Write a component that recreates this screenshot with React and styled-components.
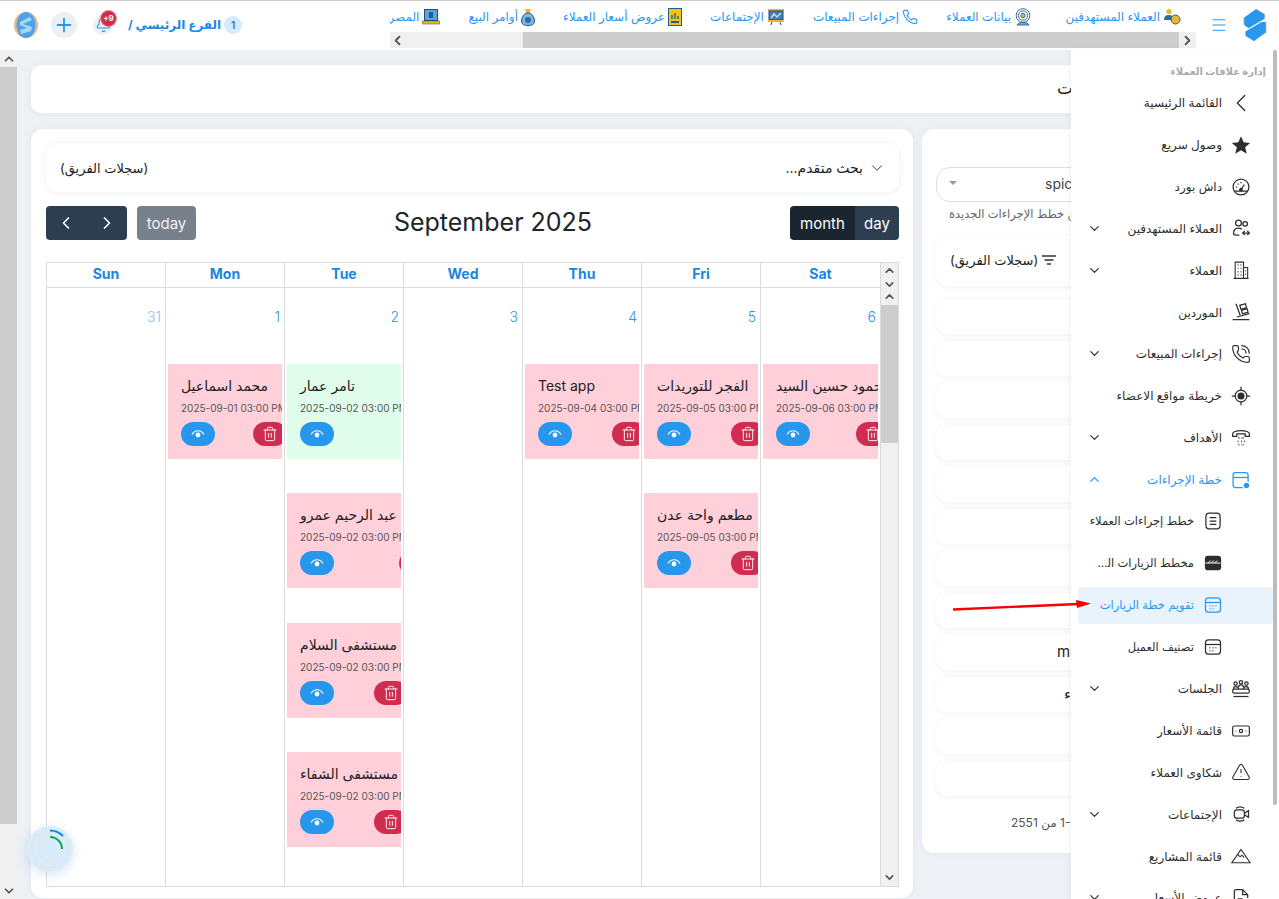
import React from 'react';
import styled, { createGlobalStyle } from 'styled-components';
import {
  Banknote,
  ChevronDown,
  ChevronLeft,
  ChevronRight,
  ChevronUp,
  Menu,
  PhoneCall,
  Plus,
  Bell,
  Trash2,
  TriangleAlert,
} from 'lucide-react';

const FONT = 'Inter, "Noto Sans", "DejaVu Sans", sans-serif';

const GlobalStyle = createGlobalStyle`
  html, body {
    margin: 0;
    height: 100%;
    overflow: hidden;
    background: #edf0f4;
    font-family: ${FONT};
  }
  * { box-sizing: border-box; }
`;

const LogoMark = ({ size = 28 }) => (
  <svg width={size} height={size * 1.15} viewBox="0 0 26 30">
    <path d="M2 8 2 14 6 16 6 7Z" fill="#f3c9a6" />
    <path d="M20 14 24 12 24 22 20 24Z" fill="#f3c9a6" />
    <path d="M14 0 22 5 22 9 7 18 3 15 3 8Z" fill="#2a97ee" />
    <path d="M23 12 23 22 12 30 4 25 4 21 19 12Z" fill="#2a97ee" />
  </svg>
);

const Avatar = () => (
  <svg width="24" height="26" viewBox="0 0 24 26">
    <ellipse cx="12" cy="13" rx="12" ry="13" fill="#e5b98a" />
    <ellipse cx="12" cy="13" rx="9.5" ry="13" fill="#4ea3e8" />
    <path d="M6 10 16 5 18 8 9 12 18 15 17 19 7 22 6 18 13 16 6 13Z" fill="#a8d8f8" />
  </svg>
);

const Spinner = () => (
  <svg width="46" height="46" viewBox="0 0 46 46">
    <circle cx="23" cy="23" r="23" fill="#d8ecfc" />
    <circle cx="23" cy="23" r="18.5" fill="none" stroke="#e4e6e6" strokeWidth="1.5" />
    <circle cx="23" cy="23" r="12" fill="none" stroke="#e4e6e6" strokeWidth="1.5" />
    <path d="M23 4.500A18.500 18.500 0 0 1 36 10" fill="none" stroke="#1a86e0" strokeWidth="2" />
    <path d="M23 11A12 12 0 0 1 35 23" fill="none" stroke="#14a44d" strokeWidth="2" />
  </svg>
);

const Arrow = () => (
  <svg width="140" height="12" viewBox="0 0 140 12">
    <path d="M1 9.500 126 4" stroke="#f40000" strokeWidth="2.400" fill="none" />
    <path d="M124 0 139 3.600 125 8Z" fill="#f40000" />
  </svg>
);

const EyeMark = () => (
  <svg width="14" height="12" viewBox="0 0 14 12" fill="none">
    <path d="M1 6.500C4 1.500 10 1.500 13 6.500" stroke="#fff" strokeWidth="1.200" />
    <circle cx="7" cy="7" r="2.400" fill="#fff" />
  </svg>
);

/* small coloured pictures of the top menu */
const TargetIcon = () => (
  <svg width="18" height="18" viewBox="0 0 18 18">
    <circle cx="6" cy="3.500" r="2.600" fill="#f0b429" />
    <path d="M1 12c0-4 2-5 5-5s4 1 4 3v2Z" fill="#2b6ea6" />
    <circle cx="12.500" cy="11.500" r="4.500" fill="#f0b429" stroke="#1f5f94" />
  </svg>
);
const DataIcon = () => (
  <svg width="18" height="18" viewBox="0 0 18 18" fill="none" stroke="#2b6ea6">
    <circle cx="9" cy="7.500" r="6.800" />
    <circle cx="9" cy="7.500" r="4.600" />
    <circle cx="9" cy="7.500" r="2.200" fill="#f0b429" />
    <path d="M3 17c1-2 3-2.500 6-2.500s5 .5 6 2.500Z" fill="#7fb3dc" />
  </svg>
);
const CallIcon = () => (
  <svg width="16" height="16" viewBox="0 0 24 24" fill="none" stroke="#2b96ee" strokeWidth="1.700">
    <path d="M22 17v3a2 2 0 0 1-2.200 2A19.800 19.800 0 0 1 2 4.200 2 2 0 0 1 4 2h3a2 2 0 0 1 2 1.700l.5 3a2 2 0 0 1-.6 1.800L7.600 9.800a16 16 0 0 0 6.600 6.600l1.300-1.300a2 2 0 0 1 1.800-.6l3 .5a2 2 0 0 1 1.700 2Z" />
  </svg>
);
const BoardIcon = () => (
  <svg width="18" height="18" viewBox="0 0 18 18">
    <rect x="1" y="1" width="16" height="2" fill="#f0b429" />
    <rect x="2" y="3" width="14" height="9" fill="#3d7fb8" stroke="#1f4f78" />
    <path d="M4 10 7 6 10 9 14 5" stroke="#bfe0f7" strokeWidth="1.500" fill="none" />
    <rect x="1" y="12" width="16" height="2" fill="#f0b429" />
    <path d="M5 14 4 17M13 14l1 3" stroke="#1f4f78" />
  </svg>
);
const OfferIcon = () => (
  <svg width="14" height="18" viewBox="0 0 14 18">
    <rect x=".5" y=".5" width="13" height="17" fill="#f0c419" stroke="#1f5f94" />
    <path d="M4 11V7M7 11V5M10 11V8" stroke="#1f5f94" strokeWidth="1.400" />
    <rect x="3" y="13" width="8" height="2" fill="#1f5f94" />
  </svg>
);
const BagIcon = () => (
  <svg width="14" height="18" viewBox="0 0 14 18">
    <path d="M4 1h6L8.500 5h-3Z" fill="#f0b429" />
    <path d="M5 5h4c3 2 4.500 5 4.500 8 0 3-2 4.500-6.500 4.500S.5 16 .5 13c0-3 1.500-6 4.500-8Z" fill="#7fb3dc" stroke="#1f5f94" />
    <circle cx="7" cy="12" r="3" fill="#2b6ea6" />
  </svg>
);
const LaptopIcon = () => (
  <svg width="18" height="16" viewBox="0 0 18 16">
    <rect x="2.500" y=".5" width="13" height="11" fill="#5aa4dc" stroke="#1f4f78" />
    <rect x="7" y="3" width="4" height="6" fill="#1f5f94" />
    <rect x="0" y="12" width="18" height="3" fill="#f0b429" stroke="#1f4f78" strokeWidth=".5" />
  </svg>
);

/* sidebar line icons */
const line = { width: 20, height: 20, viewBox: '0 0 24 24', fill: 'none', stroke: 'currentColor', strokeWidth: 1.5 };
const StarMark = () => (
  <svg width="20" height="20" viewBox="0 0 24 24" fill="currentColor">
    <path d="M12 1.500 15.200 8.800 23 9.500 17 14.700 18.900 22.500 12 18.300 5.100 22.500 7 14.700 1 9.500 8.800 8.800Z" />
  </svg>
);
const Dial = () => (
  <svg {...line}>
    <circle cx="12" cy="12" r="9.500" />
    <path d="M3.500 17h17M12 15l4-6M6 12h1.500M12 6v1.500M8 8l1 1" />
    <circle cx="12" cy="15" r="1.500" fill="currentColor" />
  </svg>
);
const PeopleSwap = () => (
  <svg {...line}>
    <circle cx="9" cy="6" r="3.500" />
    <circle cx="17" cy="7" r="2.800" />
    <path d="M3 19c0-5 2-7 6-7 1.500 0 3 .4 4 1.500M3 19c0 1 1 1.500 3 1.500h4M14 18h8M19.500 15.500 22 18l-2.500 2.500M16.500 20.500 14 18l2.500-2.500" />
  </svg>
);
const Tower = () => (
  <svg {...line} strokeWidth={1.3}>
    <path d="M5 22V2.500h10V22M15 9h5v13M3 22h18" />
    <path d="M8 6h1M11.500 6h1M8 10h1M11.500 10h1M8 14h1M11.500 14h1M8 18h1M11.500 18h1M17 13h1M17 17h1" strokeWidth="1.700" />
  </svg>
);
const Trolley = () => (
  <svg {...line}>
    <path d="M6 2 11 16M2 21h20M7 18l15-4" />
    <rect x="11" y="3" width="7" height="5" transform="rotate(-15 14 5)" />
    <rect x="13" y="9" width="7" height="4.500" transform="rotate(-15 16 11)" />
  </svg>
);
const Locate = () => (
  <svg {...line}>
    <circle cx="12" cy="12" r="7" />
    <circle cx="12" cy="12" r="3.500" fill="currentColor" />
    <path d="M12 1v4M12 19v4M1 12h4M19 12h4" />
  </svg>
);
const DeskPhone = () => (
  <svg {...line}>
    <path d="M2 10V7c0-2 4-4 10-4s10 2 10 4v3h-5V7H7v3Z" />
    <path d="M9 12h1M14 12h1M8 16h1M12 16h1M16 16h1M9 20h1M14 20h1M12 12h.5M12 20h.5" strokeWidth="2.200" />
  </svg>
);
const PlanIcon = () => (
  <svg {...line}>
    <rect x="2.500" y="3" width="18" height="18" rx="3" />
    <path d="M2.500 9h18" />
    <circle cx="18.500" cy="18.500" r="4" fill="currentColor" stroke="#fff" />
  </svg>
);
const ListBox = () => (
  <svg {...line}>
    <rect x="3.500" y="2.500" width="17" height="19" rx="4" />
    <path d="M8 8h8M8 12h8M8 16h8" />
  </svg>
);
const DarkChart = () => (
  <svg {...line}>
    <rect x="3" y="4" width="18" height="16" rx="3" fill="currentColor" />
    <path d="M6 12l3-3M10 12l3-3M14 12l3-3M3 12h18" stroke="#fff" strokeWidth="1.200" />
  </svg>
);
const CalendarBox = () => (
  <svg {...line}>
    <rect x="3" y="3.500" width="18" height="17" rx="3.500" />
    <path d="M3 9h18" />
    <path d="M8 13h1M11.500 13h1M15 13h1M8 16.500h1M11.500 16.500h1" strokeWidth="1.800" />
  </svg>
);
const Sessions = () => (
  <svg {...line}>
    <circle cx="5.500" cy="5.500" r="2" />
    <circle cx="12" cy="4" r="2" />
    <circle cx="18.500" cy="5.500" r="2" />
    <path d="M3 12c0-2 1-3 2.500-3S9 10 9 12M9 10c0-2 1-3 3-3s3 1 3 3M15 12c0-2 1-3 3-3s3 1 3 3" />
    <rect x="2" y="12" width="20" height="5" rx="2" />
    <path d="M3 21h18" />
  </svg>
);
const Meeting = () => (
  <svg {...line}>
    <path d="M6 5a9 9 0 0 1 10 0M6 19a9 9 0 0 0 10 0" />
    <rect x="4" y="7" width="12" height="10" rx="3" />
    <path d="m16 11 5-3v8l-5-3" />
  </svg>
);
const Peak = () => (
  <svg {...line} strokeWidth={1.3}>
    <path d="M1 20 12 4l11 16ZM8 10l3 3 2-2 3 3" />
  </svg>
);
const QuoteFile = () => (
  <svg {...line}>
    <path d="M14 2H6a2 2 0 0 0-2 2v16a2 2 0 0 0 2 2h7M14 2l6 6v4M14 2v6h6M8 13h6M8 17h4M16 20h6M19 17v6" />
  </svg>
);

const navItems = [
  { label: 'العملاء المستهدفين', Icon: TargetIcon, min: 100 },
  { label: 'بيانات العملاء', Icon: DataIcon },
  { label: 'إجراءات المبيعات', Icon: CallIcon },
  { label: 'الإجتماعات', Icon: BoardIcon },
  { label: 'عروض أسعار العملاء', Icon: OfferIcon },
  { label: 'أوامر البيع', Icon: BagIcon },
  { label: 'المصر', Icon: LaptopIcon },
];

const menuItems = [
  { label: 'القائمة الرئيسية', icon: <ChevronLeft size={30} strokeWidth={1} /> },
  { label: 'وصول سريع', icon: <StarMark /> },
  { label: 'داش بورد', icon: <Dial /> },
  { label: 'العملاء المستهدفين', icon: <PeopleSwap />, caret: 'down' },
  { label: 'العملاء', icon: <Tower />, caret: 'down' },
  { label: 'الموردين', icon: <Trolley /> },
  { label: 'إجراءات المبيعات', icon: <PhoneCall size={20} strokeWidth={1.4} />, caret: 'down' },
  { label: 'خريطة مواقع الاعضاء', icon: <Locate /> },
  { label: 'الأهداف', icon: <DeskPhone />, caret: 'down' },
  { label: 'خطة الإجراءات', icon: <PlanIcon />, caret: 'up', open: true },
  { label: 'خطط إجراءات العملاء', icon: <ListBox />, sub: true },
  { label: 'مخطط الزيارات الشهري', icon: <DarkChart />, sub: true, max: 102 },
  { label: 'تقويم خطة الزيارات', icon: <CalendarBox />, sub: true, active: true },
  { label: 'تصنيف العميل', icon: <CalendarBox />, sub: true },
  { label: 'الجلسات', icon: <Sessions />, caret: 'down' },
  { label: 'قائمة الأسعار', icon: <Banknote size={20} strokeWidth={1.4} /> },
  { label: 'شكاوى العملاء', icon: <TriangleAlert size={20} strokeWidth={1.3} /> },
  { label: 'الإجتماعات', icon: <Meeting />, caret: 'down' },
  { label: 'قائمة المشاريع', icon: <Peak /> },
  { label: 'عروض الأسعار', icon: <QuoteFile />, caret: 'down' },
];

const days = [
  { name: 'Sun', date: 31, muted: true, events: [] },
  { name: 'Mon', date: 1, events: [{ title: 'محمد اسماعيل', at: '2025-09-01 03:00 PM' }] },
  {
    name: 'Tue',
    date: 2,
    events: [
      { title: 'تامر عمار', at: '2025-09-02 03:00 PM', done: true },
      { title: 'محمد عبد الرحيم عمرو', at: '2025-09-02 03:00 PM' },
      { title: 'مستشفى السلام', at: '2025-09-02 03:00 PM' },
      { title: 'مستشفى الشفاء', at: '2025-09-02 03:00 PM' },
    ],
  },
  { name: 'Wed', date: 3, events: [] },
  { name: 'Thu', date: 4, events: [{ title: 'Test app', at: '2025-09-04 03:00 PM' }] },
  {
    name: 'Fri',
    date: 5,
    events: [
      { title: 'الفجر للتوريدات', at: '2025-09-05 03:00 PM' },
      { title: 'مطعم واحة عدن', at: '2025-09-05 03:00 PM' },
    ],
  },
  { name: 'Sat', date: 6, events: [{ title: 'محمود حسين السيد', at: '2025-09-06 03:00 PM' }] },
];

const customerRows = [
  {}, {}, {}, {}, {}, {}, {}, {},
  { text: 'mahmoud', inset: 121 },
  { text: 'شركة الضياء', inset: 128 },
  {}, {},
];

const Page = styled.div`
  position: relative;
  width: 100%;
  height: 100vh;
  display: flex;
  flex-direction: column;
  overflow: hidden;
`;

const Header = styled.header`
  flex: none;
  height: 50px;
  display: flex;
  align-items: flex-start;
  background: #fff;
  border-top: 1px solid #cfcfcf;
`;

const Tools = styled.div`
  display: flex;
  align-items: center;
  height: 47px;
  padding-left: 14px;
`;

const RoundTool = styled.div`
  position: relative;
  width: ${(p) => p.$size}px;
  height: ${(p) => p.$size}px;
  margin-left: ${(p) => p.$gap}px;
  display: flex;
  align-items: center;
  justify-content: center;
  border-radius: 50%;
  background: #ebf0f5;
  color: #2b96ee;
`;

const Badge = styled.span`
  position: absolute;
  top: -4px;
  right: -3px;
  width: 15px;
  height: 15px;
  border-radius: 50%;
  background: #d02c50;
  color: #fff;
  font-size: 8px;
  font-weight: 700;
  line-height: 15px;
  text-align: center;
  box-shadow: 0 0 0 1px #e88;
`;

const Branch = styled.div`
  display: flex;
  align-items: center;
  gap: 3px;
  margin-left: 15px;
  font-size: 12px;
  font-weight: 700;
  color: #1e88e5;
  white-space: nowrap;
`;

const BranchCount = styled.span`
  width: 18px;
  height: 18px;
  border-radius: 50%;
  background: #d6eaff;
  color: #1e78c5;
  font-size: 10px;
  font-weight: 600;
  line-height: 18px;
  text-align: center;
`;

const NavStrip = styled.div`
  width: 806px;
  margin-left: auto;
  display: flex;
  flex-direction: column;
`;

const NavRow = styled.nav`
  direction: rtl;
  height: 31px;
  display: flex;
  align-items: center;
  gap: 28px;
  padding: 0 15px 0 0;
  overflow: hidden;
`;

const NavLink = styled.a`
  display: flex;
  align-items: center;
  gap: 3px;
  color: #2b96ee;
  font-size: 12px;
  white-space: nowrap;
`;

const NavLabel = styled.span`
  min-width: ${(p) => p.$min || 0}px;
`;

const Hbar = styled.div`
  height: 16px;
  display: flex;
  background: #f0f0f0;
  color: #555;
`;

const HbarEnd = styled.span`
  flex: none;
  width: ${(p) => p.$width}px;
  display: flex;
  align-items: center;
  justify-content: ${(p) => p.$justify};
`;

const HbarThumb = styled.span`
  flex: 1;
  background: #cdcdcd;
`;

const MenuButton = styled.button`
  flex: none;
  width: 45px;
  height: 47px;
  padding: 0;
  border: 0;
  background: none;
  color: #2b96ee;
  display: flex;
  align-items: center;
  justify-content: center;
`;

const Brand = styled.div`
  flex: none;
  width: 38px;
  height: 47px;
  padding-top: 8px;
`;

const Content = styled.div`
  flex: 1;
  min-height: 0;
  display: flex;
`;

const PageScroll = styled.div`
  flex: none;
  width: 17px;
  display: flex;
  flex-direction: column;
  background: #f0f0f0;
  color: #555;
`;

const ScrollCap = styled.span`
  flex: none;
  height: ${(p) => p.$height}px;
  display: flex;
  align-items: ${(p) => p.$align || 'center'};
  justify-content: center;
  overflow: hidden;
  svg {
    flex: none;
  }
`;

const ScrollThumb = styled.span`
  flex: ${(p) => (p.$height ? 'none' : 1)};
  height: ${(p) => (p.$height ? `${p.$height}px` : 'auto')};
  background: #cdcdcd;
`;

const ScrollRest = styled.span`
  flex: 1;
`;

const Main = styled.main`
  flex: 1;
  min-width: 0;
  padding: 15px 0 0 14px;
  display: flex;
  flex-direction: column;
  gap: 16px;
  overflow: hidden;
`;

const TitleCard = styled.div`
  flex: none;
  width: 1233px;
  height: 48px;
  padding-left: 1026px;
  background: #fff;
  border-radius: 10px;
  box-shadow: 0 0 6px rgba(60, 80, 110, 0.06);
  font-size: 17px;
  line-height: 46px;
  color: #222;
  white-space: nowrap;
  overflow: hidden;
`;

const Columns = styled.div`
  display: flex;
  align-items: flex-start;
  gap: 9px;
`;

const CalendarCard = styled.section`
  flex: none;
  width: 882px;
  height: 769px;
  padding: 14px 14px 0 15px;
  background: #fff;
  border-radius: 12px;
  box-shadow: 0 0 6px rgba(60, 80, 110, 0.06);
`;

const SearchBar = styled.div`
  height: 49px;
  display: flex;
  align-items: center;
  justify-content: space-between;
  padding: 0 13px 0 14px;
  border-radius: 12px;
  background: #fff;
  box-shadow: 0 1px 6px rgba(60, 80, 110, 0.1);
  font-size: 13px;
  color: #222;
`;

const Advanced = styled.span`
  display: flex;
  align-items: center;
  gap: 5px;
  font-size: 14px;
`;

const Toolbar = styled.div`
  margin-top: 14px;
  height: 34px;
  display: flex;
  align-items: center;
  justify-content: space-between;
`;

const ButtonRow = styled.div`
  display: flex;
  align-items: center;
  gap: 10px;
`;

const ButtonGroup = styled.div`
  display: flex;
  border-radius: 4px;
  overflow: hidden;
`;

const CalButton = styled.button`
  height: 34px;
  width: ${(p) => p.$width}px;
  padding: 0;
  border: 0;
  display: flex;
  align-items: center;
  justify-content: center;
  background: ${(p) => p.$bg || '#2c3e50'};
  color: #fff;
  font-family: ${FONT};
  font-size: 15px;
`;

const TodayButton = styled(CalButton)`
  background: #78808c;
  border-radius: 4px;
  color: #eef0f2;
`;

const MonthTitle = styled.h2`
  margin: 0;
  padding-bottom: 3px;
  font-size: 25px;
  font-weight: 400;
  color: #212529;
`;

const Frame = styled.div`
  margin-top: 22px;
  height: 625px;
  display: flex;
  border: 1px solid #dcdcdc;
`;

const Grid = styled.div`
  flex: none;
  width: 834px;
  display: grid;
  grid-template-columns: repeat(6, 119px) 120px;
  grid-template-rows: 25px 1fr;
`;

const DayHead = styled.div`
  border-right: 1px solid #dcdcdc;
  border-bottom: 1px solid #dcdcdc;
  color: #1a86e0;
  font-size: 14px;
  font-weight: 700;
  line-height: 21px;
  text-align: center;
`;

const DayCell = styled.div`
  min-width: 0;
  border-right: 1px solid #dcdcdc;
  display: flex;
  flex-direction: column;
  padding: 0 2px 0 2px;
  overflow: hidden;
`;

const DayNumber = styled.div`
  height: 76px;
  padding: 20px 2px 0 0;
  text-align: right;
  color: #2b96ee;
  font-size: 14px;
  font-weight: 300;
  opacity: ${(p) => (p.$muted ? 0.6 : 1)};
`;

const EventCard = styled.div`
  flex: none;
  height: 95px;
  margin-bottom: 34.4px;
  padding: 11px 0 0 13px;
  background: ${(p) => (p.$done ? '#e0fdec' : '#ffd0da')};
  overflow: hidden;
`;

const EventBody = styled.div`
  display: inline-flex;
  flex-direction: column;
  width: max-content;
`;

const EventTitle = styled.div`
  font-size: 14px;
  line-height: 20px;
  color: #222;
  white-space: nowrap;
`;

const EventTime = styled.div`
  margin-top: 4px;
  font-size: 10px;
  line-height: 16px;
  color: #555;
  white-space: nowrap;
`;

const EventActions = styled.div`
  margin-top: 6px;
  display: flex;
  justify-content: space-between;
`;

const PillButton = styled.button`
  width: 34px;
  height: 24px;
  padding: 0;
  border: 0;
  border-radius: 12px;
  background: ${(p) => p.$bg};
  color: #fff;
  display: flex;
  align-items: center;
  justify-content: center;
`;

const GridScroll = styled.div`
  flex: 1;
  display: flex;
  flex-direction: column;
  background: #f0f0f0;
  color: #555;
`;

const CustomersCard = styled.section`
  flex: none;
  width: 342px;
  height: 724px;
  padding: 38px 14px 0;
  background: #fff;
  border-radius: 12px;
  box-shadow: 0 0 6px rgba(60, 80, 110, 0.06);
  overflow: hidden;
`;

const SelectBox = styled.div`
  height: 35px;
  display: flex;
  align-items: center;
  gap: 88px;
  padding: 0 0 3px 12px;
  border: 1px solid #dedede;
  border-radius: 14px;
  font-size: 14px;
  color: #444;
`;

const Caret = styled.span`
  width: 0;
  height: 0;
  border-left: 4px solid transparent;
  border-right: 4px solid transparent;
  border-top: 4px solid #999;
`;

const Hint = styled.div`
  margin-top: 5px;
  padding-left: 13px;
  font-size: 11.5px;
  line-height: 14px;
  color: #666;
  white-space: nowrap;
`;

const FilterBar = styled.div`
  margin-top: 15px;
  height: 50px;
  display: flex;
  align-items: center;
  gap: 3px;
  padding: 0 0 2px 14px;
  border-radius: 12px;
  box-shadow: 0 1px 6px rgba(60, 80, 110, 0.08);
  font-size: 13px;
  color: #222;
`;

const RowList = styled.div`
  margin-top: 13px;
  display: flex;
  flex-direction: column;
  gap: 7px;
`;

const CustomerRow = styled.div`
  height: 35px;
  padding-left: ${(p) => p.$inset || 0}px;
  border-radius: 12px;
  box-shadow: 0 1px 6px rgba(60, 80, 110, 0.08);
  font-size: 15px;
  line-height: 33px;
  color: #222;
  white-space: nowrap;
  overflow: hidden;
`;

const Pager = styled.div`
  margin-top: 19px;
  padding-left: 75px;
  font-size: 12px;
  color: #555;
  white-space: nowrap;
`;

const Sidebar = styled.aside`
  position: absolute;
  top: 50px;
  right: 0;
  bottom: 0;
  width: 208px;
  display: flex;
  background: #fff;
  box-shadow: -2px 0 6px rgba(60, 80, 110, 0.06);
  overflow: hidden;
`;

const SideList = styled.div`
  direction: rtl;
  flex: 1;
  min-width: 0;
  padding-top: 15px;
`;

const SideTitle = styled.div`
  height: 17px;
  padding-right: 7px;
  font-size: 10px;
  font-weight: 700;
  line-height: 13px;
  color: #aaa;
`;

const SideItem = styled.div`
  height: 41.85px;
  display: flex;
  align-items: center;
  justify-content: flex-start;
  padding: 0 ${(p) => (p.$sub ? 49 : 21)}px 0 ${(p) => (p.$sub ? 0 : 16)}px;
  gap: 8px;
  font-size: ${(p) => (p.$sub ? 11.5 : 12)}px;
  color: ${(p) => (p.$open || p.$active ? '#2b96ee' : '#2d2d2d')};
  white-space: nowrap;
`;

const ActiveSlot = styled.div`
  height: 41.85px;
  padding: 2.500px 0 2.500px 7px;
`;

const ActivePanel = styled(SideItem)`
  height: 37px;
  border-radius: 4px;
  background: #e8f3fb;
`;

const SideIcon = styled.span`
  flex: none;
  width: 22px;
  display: flex;
  justify-content: center;
  svg {
    flex: none;
  }
`;

const SideLabel = styled.span`
  overflow: hidden;
  text-overflow: ellipsis;
  max-width: ${(p) => (p.$max ? `${p.$max}px` : 'none')};
`;

const SideCaret = styled.span`
  margin-right: auto;
  display: flex;
  color: ${(p) => (p.$open ? '#2b96ee' : '#333')};
`;

const SideRail = styled.div`
  flex: none;
  width: 6px;
  padding-right: 2px;
`;

const SideThumb = styled.div`
  height: 755px;
  border-radius: 3px;
  background: #bcbcbc;
`;

const FloatingSpinner = styled.div`
  position: absolute;
  left: 27px;
  top: 826px;
  width: 46px;
  height: 46px;
  border-radius: 50%;
  box-shadow: 0 3px 12px rgba(60, 130, 200, 0.2);
`;

const PointerArrow = styled.div`
  position: absolute;
  left: 952px;
  top: 600px;
  line-height: 0;
`;

const MenuEntry = ({ item }) => {
  const body = (
    <>
      <SideIcon>{item.icon}</SideIcon>
      <SideLabel $max={item.max}>{item.label}</SideLabel>
      {item.caret && (
        <SideCaret $open={item.open}>
          {item.caret === 'up' ? <ChevronUp size={15} /> : <ChevronDown size={15} />}
        </SideCaret>
      )}
    </>
  );
  if (item.active) {
    return (
      <ActiveSlot>
        <ActivePanel $sub $active>
          {body}
        </ActivePanel>
      </ActiveSlot>
    );
  }
  return (
    <SideItem $sub={item.sub} $open={item.open}>
      {body}
    </SideItem>
  );
};

const CalendarEvent = ({ event }) => (
  <EventCard $done={event.done}>
    <EventBody>
      <EventTitle>{event.title}</EventTitle>
      <EventTime>{event.at}</EventTime>
      <EventActions>
        <PillButton $bg="#2797ee">
          <EyeMark />
        </PillButton>
        {!event.done && (
          <PillButton $bg="#d02c50">
            <Trash2 size={16} strokeWidth={1.4} />
          </PillButton>
        )}
      </EventActions>
    </EventBody>
  </EventCard>
);

export default function App() {
  return (
    <Page>
      <GlobalStyle />
      <Header>
        <Tools>
          <Avatar />
          <RoundTool $size={26} $gap={13}>
            <Plus size={22} strokeWidth={2} />
          </RoundTool>
          <RoundTool $size={20} $gap={16}>
            <Bell size={17} strokeWidth={1.5} />
            <Badge>+9</Badge>
          </RoundTool>
          <Branch>
            <span dir="rtl">الفرع الرئيسي /</span>
            <BranchCount>1</BranchCount>
          </Branch>
        </Tools>
        <NavStrip>
          <NavRow>
            {navItems.map(({ label, Icon, min }) => (
              <NavLink key={label}>
                <Icon />
                <NavLabel $min={min}>{label}</NavLabel>
              </NavLink>
            ))}
          </NavRow>
          <Hbar>
            <HbarEnd $width={133} $justify="flex-start">
              <ChevronLeft size={15} strokeWidth={3} />
            </HbarEnd>
            <HbarThumb />
            <HbarEnd $width={17} $justify="center">
              <ChevronRight size={15} strokeWidth={3} />
            </HbarEnd>
          </Hbar>
        </NavStrip>
        <MenuButton>
          <Menu size={18} strokeWidth={1.5} />
        </MenuButton>
        <Brand>
          <LogoMark />
        </Brand>
      </Header>
      <Content>
        <PageScroll>
          <ScrollCap $height={17}>
            <ChevronUp size={14} strokeWidth={3} />
          </ScrollCap>
          <ScrollThumb $height={757} />
          <ScrollRest />
          <ScrollCap $height={17}>
            <ChevronDown size={14} strokeWidth={3} />
          </ScrollCap>
        </PageScroll>
        <Main>
          <TitleCard>
            <span dir="rtl">خطة الزيارات</span>
          </TitleCard>
          <Columns>
            <CalendarCard>
              <SearchBar>
                <span>(سجلات الفريق)</span>
                <Advanced>
                  <span dir="rtl">بحث متقدم...</span>
                  <ChevronDown size={18} strokeWidth={1.2} />
                </Advanced>
              </SearchBar>
              <Toolbar>
                <ButtonRow>
                  <ButtonGroup>
                    <CalButton $width={40}>
                      <ChevronLeft size={20} strokeWidth={2} />
                    </CalButton>
                    <CalButton $width={41}>
                      <ChevronRight size={20} strokeWidth={2} />
                    </CalButton>
                  </ButtonGroup>
                  <TodayButton $width={59}>today</TodayButton>
                </ButtonRow>
                <MonthTitle>September 2025</MonthTitle>
                <ButtonGroup>
                  <CalButton $width={65} $bg="#1a252f">
                    month
                  </CalButton>
                  <CalButton $width={44}>day</CalButton>
                </ButtonGroup>
              </Toolbar>
              <Frame>
                <Grid>
                  {days.map((day) => (
                    <DayHead key={day.name}>{day.name}</DayHead>
                  ))}
                  {days.map((day) => (
                    <DayCell key={day.date}>
                      <DayNumber $muted={day.muted}>{day.date}</DayNumber>
                      {day.events.map((event) => (
                        <CalendarEvent key={event.title} event={event} />
                      ))}
                    </DayCell>
                  ))}
                </Grid>
                <GridScroll>
                  <ScrollCap $height={15}>
                    <ChevronUp size={13} strokeWidth={3} />
                  </ScrollCap>
                  <ScrollCap $height={10} $align="flex-start">
                    <ChevronDown size={13} strokeWidth={3} />
                  </ScrollCap>
                  <ScrollCap $height={17}>
                    <ChevronUp size={13} strokeWidth={3} />
                  </ScrollCap>
                  <ScrollThumb $height={138} />
                  <ScrollRest />
                  <ScrollCap $height={17}>
                    <ChevronDown size={13} strokeWidth={3} />
                  </ScrollCap>
                </GridScroll>
              </Frame>
            </CalendarCard>
            <CustomersCard>
              <SelectBox>
                <Caret />
                <span>spicer</span>
              </SelectBox>
              <Hint>
                <span dir="rtl">تعيين خطط الإجراءات الجديدة</span>
              </Hint>
              <FilterBar>
                <span>(سجلات الفريق)</span>
                <svg width="16" height="12" viewBox="0 0 16 12" fill="none" stroke="#333" strokeWidth="1.400">
                  <path d="M1 2h14M3.500 6h9M6 10h4" />
                </svg>
              </FilterBar>
              <RowList>
                {customerRows.map((row, i) => (
                  <CustomerRow key={i} $inset={row.inset}>
                    {row.text && <span dir="auto">{row.text}</span>}
                  </CustomerRow>
                ))}
              </RowList>
              <Pager>
                <span dir="rtl">1-12 من 2551</span>
              </Pager>
            </CustomersCard>
          </Columns>
        </Main>
      </Content>
      <Sidebar>
        <SideList>
          <SideTitle>إدارة علاقات العملاء</SideTitle>
          {menuItems.map((item) => (
            <MenuEntry key={item.label + (item.sub ? 's' : '')} item={item} />
          ))}
        </SideList>
        <SideRail>
          <SideThumb />
        </SideRail>
      </Sidebar>
      <FloatingSpinner>
        <Spinner />
      </FloatingSpinner>
      <PointerArrow>
        <Arrow />
      </PointerArrow>
    </Page>
  );
}
